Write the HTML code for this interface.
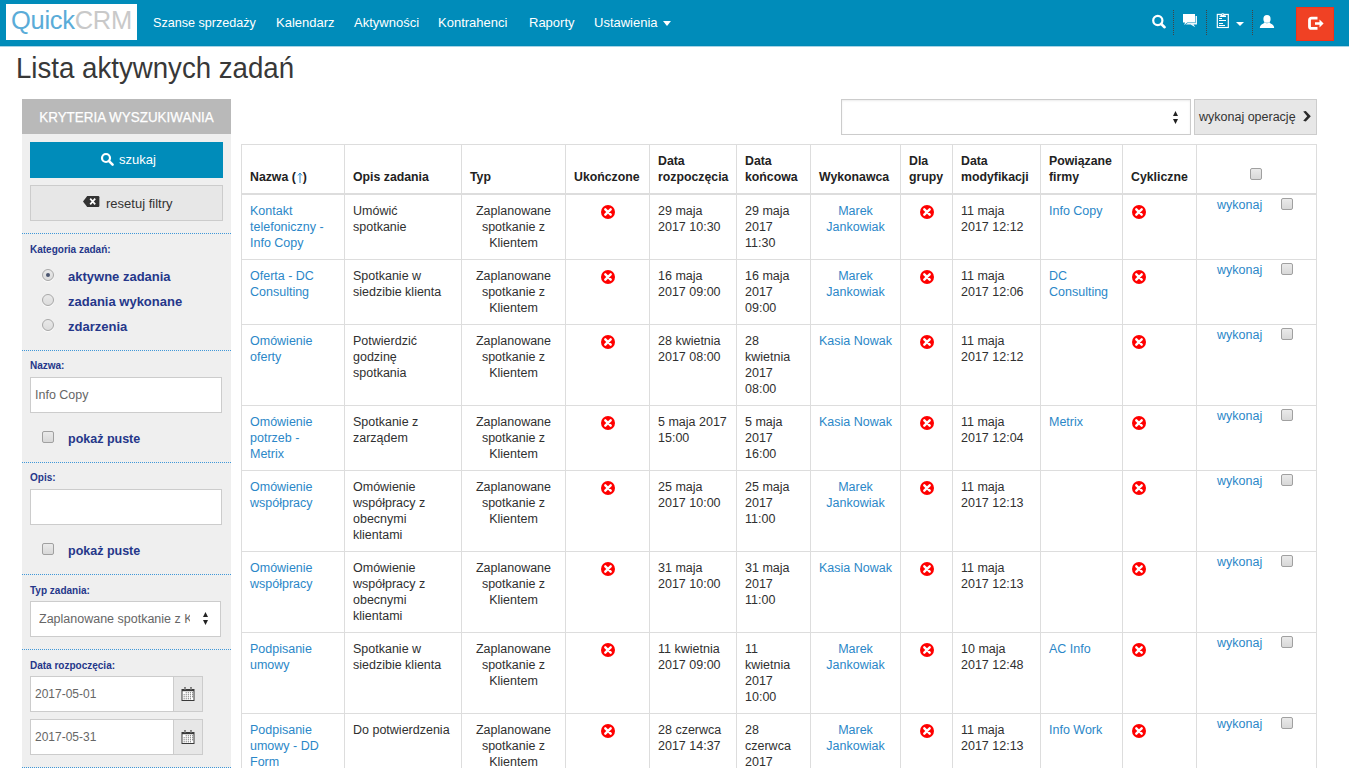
<!DOCTYPE html>
<html><head><meta charset="utf-8"><title>QuickCRM - Lista aktywnych zadań</title>
<style>
html,body{margin:0;padding:0;}
body{width:1349px;height:768px;overflow:hidden;position:relative;background:#fff;font-family:"Liberation Sans", sans-serif;}
.t{position:absolute;white-space:nowrap;font-family:"Liberation Sans", sans-serif;}
svg{display:block}
</style></head><body>
<div style="position:absolute;left:0px;top:0px;width:1349px;height:46px;background:#008cba"></div>
<div style="position:absolute;left:0px;top:45px;width:1349px;height:1px;background:#0088b6"></div>
<div style="position:absolute;left:0px;top:46px;width:1349px;height:1px;background:#a6d4e6"></div>
<div style="position:absolute;left:6px;top:4px;width:131px;height:36px;background:#fff"></div>
<div class="t" style="left:11px;top:4px;font-size:25.5px;line-height:32px;letter-spacing:-0.3px;"><span style="color:#5aacd8">Quick</span><span style="color:#c9c9c9">CRM</span></div>
<div class="t" style="left:153px;top:15px;font-size:12.6px;line-height:16px;color:#fff;">Szanse sprzedaży</div>
<div class="t" style="left:276px;top:15px;font-size:13px;line-height:16px;color:#fff;">Kalendarz</div>
<div class="t" style="left:354px;top:15px;font-size:13px;line-height:16px;color:#fff;">Aktywności</div>
<div class="t" style="left:438px;top:15px;font-size:13px;line-height:16px;color:#fff;">Kontrahenci</div>
<div class="t" style="left:529px;top:15px;font-size:13px;line-height:16px;color:#fff;">Raporty</div>
<div class="t" style="left:594px;top:15px;font-size:13px;line-height:16px;color:#fff;">Ustawienia</div>
<svg style="position:absolute;left:663px;top:21px" width="8" height="5"><path d="M0 0H8L4 5Z" fill="#fff"/></svg>
<svg style="position:absolute;left:1150px;top:12px" width="18" height="18" viewBox="0 0 18 18">
<circle cx="7.8" cy="8.5" r="4.6" fill="none" stroke="#fff" stroke-width="2.2"/>
<path d="M11 11.8 L14.6 15.2" stroke="#fff" stroke-width="2.6" stroke-linecap="round"/></svg>
<div style="position:absolute;left:1173px;top:10px;width:1px;height:26px;background-image:linear-gradient(#444 50%,transparent 50%);background-size:1px 2px"></div>
<div style="position:absolute;left:1206px;top:10px;width:1px;height:26px;background-image:linear-gradient(#444 50%,transparent 50%);background-size:1px 2px"></div>
<div style="position:absolute;left:1252px;top:10px;width:1px;height:26px;background-image:linear-gradient(#444 50%,transparent 50%);background-size:1px 2px"></div>
<svg style="position:absolute;left:1180px;top:12px" width="20" height="18" viewBox="0 0 20 18">
<path d="M5 4 H17 V12.5 H13.6 L15.2 15.2 L10.6 12.5 H5 Z" fill="#eaf5fb"/>
<path d="M3 2 H15 V10.5 H7.2 L4.2 13 L5 10.5 H3 Z" fill="#fff" stroke="#008cba" stroke-width="1.1"/>
<path d="M3 2 H15 V10.5 H7.2 L4.2 13 L5 10.5 H3 Z" fill="#fff"/></svg>
<svg style="position:absolute;left:1216px;top:12px" width="14" height="17" viewBox="0 0 14 17">
<rect x="1.3" y="2.4" width="11" height="13.1" fill="none" stroke="#fff" stroke-width="1.15"/>
<path d="M3.6 4.9 H10 V3.6 H8.6 Q8.6 1.2 6.8 1.2 Q5 1.2 5 3.6 H3.6 Z" fill="#fff"/>
<circle cx="6.8" cy="2.6" r="0.55" fill="#008cba"/>
<rect x="3" y="6" width="3" height="1" fill="#fff"/><rect x="3" y="8" width="7" height="1" fill="#fff"/>
<rect x="3" y="11" width="4" height="1" fill="#fff"/><rect x="3" y="13" width="6" height="1" fill="#fff"/></svg>
<svg style="position:absolute;left:1236px;top:22px" width="8" height="4"><path d="M0 0H8L4 4Z" fill="#fff"/></svg>
<svg style="position:absolute;left:1259px;top:14px" width="16" height="15" viewBox="0 0 16 15">
<ellipse cx="8" cy="4.9" rx="3.6" ry="3.9" fill="#fff"/>
<path d="M5.3 8.2 Q8 10.5 10.7 8.2 L11.5 9.6 Q15 10.8 15.2 14 H0.8 Q1 10.8 4.5 9.6 Z" fill="#fff"/></svg>
<div style="position:absolute;left:1296px;top:7px;width:38px;height:34px;background:#f04124;box-shadow:inset 0 0 0 1px #f2321a"></div>
<svg style="position:absolute;left:1306px;top:15px" width="20" height="17" viewBox="0 0 20 17">
<path d="M11.5 3.2 H5.5 Q3.5 3.2 3.5 5.2 V11.4 Q3.5 13.4 5.5 13.4 H11.5" fill="none" stroke="#fff" stroke-width="2.8"/>
<path d="M9 7.2 H13.5 V4.6 L17.6 8.5 L13.5 12.4 V9.8 H9 Z" fill="#fff"/></svg>
<div class="t" style="left:16px;top:52px;font-size:29px;line-height:32px;color:#383838;transform:scaleX(0.953);transform-origin:0 0;">Lista aktywnych zadań</div>
<div style="position:absolute;left:22px;top:99px;width:209px;height:669px;background:#efefef"></div>
<div style="position:absolute;left:22px;top:99px;width:209px;height:35px;background:#b9b9b9"></div>
<div class="t" style="left:22px;top:107px;width:209px;text-align:center;font-size:15px;line-height:20px;color:#fff;transform:scaleX(0.895);-webkit-text-stroke:0.25px #fff">KRYTERIA WYSZUKIWANIA</div>
<div style="position:absolute;left:30px;top:142px;width:193px;height:36px;background:#008cba"></div>
<svg style="position:absolute;left:100px;top:152px" width="15" height="15" viewBox="0 0 15 15">
<circle cx="6" cy="6" r="4" fill="none" stroke="#fff" stroke-width="2.2"/>
<path d="M8.8 8.8 L12.6 12.6" stroke="#fff" stroke-width="2.6" stroke-linecap="round"/></svg>
<div class="t" style="left:119px;top:152px;font-size:13px;line-height:16px;color:#fff;">szukaj</div>
<div style="position:absolute;left:30px;top:185px;width:193px;height:36px;background:#e7e7e7;box-sizing:border-box;border:1px solid #ccc"></div>
<svg style="position:absolute;left:82px;top:195px" width="18" height="13" viewBox="0 0 18 13">
<path d="M5.2 1 H16.2 Q17.4 1 17.4 2.2 V10.8 Q17.4 12 16.2 12 H5.2 L1 6.5 Z" fill="#333"/>
<path d="M8.2 3.6 L13.2 9.4 M13.2 3.6 L8.2 9.4" stroke="#fff" stroke-width="1.7"/></svg>
<div class="t" style="left:106px;top:196px;font-size:13px;line-height:16px;color:#333;">resetuj filtry</div>
<div style="position:absolute;left:22px;top:233px;width:209px;height:1px;background-image:linear-gradient(90deg,#3f97d8 50%,transparent 50%);background-size:2px 1px"></div>
<div class="t" style="left:30px;top:242px;font-size:10px;line-height:16px;color:#25378a;font-weight:700;">Kategoria zadań:</div>
<div style="position:absolute;left:42px;top:269px;width:12px;height:12px;border-radius:50%;box-sizing:border-box;border:1px solid #a8a8a8;background:linear-gradient(#e9e9e9,#dcdcdc);box-shadow:0 1px 1px rgba(255,255,255,.8)"></div>
<div style="position:absolute;left:46px;top:273px;width:4px;height:4px;border-radius:50%;background:#4a5570"></div>
<div class="t" style="left:68px;top:269px;font-size:13px;line-height:16px;color:#25378a;font-weight:700;">aktywne zadania</div>
<div style="position:absolute;left:42px;top:294px;width:12px;height:12px;border-radius:50%;box-sizing:border-box;border:1px solid #a8a8a8;background:linear-gradient(#e9e9e9,#dcdcdc);box-shadow:0 1px 1px rgba(255,255,255,.8)"></div>
<div class="t" style="left:68px;top:294px;font-size:13px;line-height:16px;color:#25378a;font-weight:700;">zadania wykonane</div>
<div style="position:absolute;left:42px;top:319px;width:12px;height:12px;border-radius:50%;box-sizing:border-box;border:1px solid #a8a8a8;background:linear-gradient(#e9e9e9,#dcdcdc);box-shadow:0 1px 1px rgba(255,255,255,.8)"></div>
<div class="t" style="left:68px;top:319px;font-size:13px;line-height:16px;color:#25378a;font-weight:700;">zdarzenia</div>
<div style="position:absolute;left:22px;top:350px;width:209px;height:1px;background-image:linear-gradient(90deg,#3f97d8 50%,transparent 50%);background-size:2px 1px"></div>
<div class="t" style="left:30px;top:358px;font-size:10px;line-height:16px;color:#25378a;font-weight:700;">Nazwa:</div>
<div style="position:absolute;left:30px;top:377px;width:192px;height:36px;background:#fff;box-sizing:border-box;border:1px solid #ccc"></div>
<div class="t" style="left:35px;top:387px;font-size:12.5px;line-height:16px;color:#666;">Info Copy</div>
<div style="position:absolute;left:42px;top:431px;width:12px;height:12px;border-radius:2px;box-sizing:border-box;border:1px solid #a0a0a0;background:linear-gradient(#eaeaea,#d8d8d8)"></div>
<div class="t" style="left:68px;top:431px;font-size:12.5px;line-height:16px;color:#25378a;font-weight:700;">pokaż puste</div>
<div style="position:absolute;left:22px;top:462px;width:209px;height:1px;background-image:linear-gradient(90deg,#3f97d8 50%,transparent 50%);background-size:2px 1px"></div>
<div class="t" style="left:30px;top:470px;font-size:10px;line-height:16px;color:#25378a;font-weight:700;">Opis:</div>
<div style="position:absolute;left:30px;top:489px;width:192px;height:36px;background:#fff;box-sizing:border-box;border:1px solid #ccc"></div>
<div style="position:absolute;left:42px;top:543px;width:12px;height:12px;border-radius:2px;box-sizing:border-box;border:1px solid #a0a0a0;background:linear-gradient(#eaeaea,#d8d8d8)"></div>
<div class="t" style="left:68px;top:543px;font-size:12.5px;line-height:16px;color:#25378a;font-weight:700;">pokaż puste</div>
<div style="position:absolute;left:22px;top:574px;width:209px;height:1px;background-image:linear-gradient(90deg,#3f97d8 50%,transparent 50%);background-size:2px 1px"></div>
<div class="t" style="left:30px;top:583px;font-size:10px;line-height:16px;color:#25378a;font-weight:700;">Typ zadania:</div>
<div style="position:absolute;left:30px;top:601px;width:191px;height:36px;background:#fff;box-sizing:border-box;border:1px solid #ccc"></div>
<div class="t" style="left:39px;top:611px;width:151px;overflow:hidden;font-size:12.5px;line-height:16px;color:#666;white-space:nowrap">Zaplanowane spotkanie z Klientem</div>
<svg style="position:absolute;left:203px;top:612px" width="5" height="14"><path d="M0 5H5L2.5 0Z M0 8H5L2.5 13Z" fill="#222"/></svg>
<div style="position:absolute;left:22px;top:649px;width:209px;height:1px;background-image:linear-gradient(90deg,#3f97d8 50%,transparent 50%);background-size:2px 1px"></div>
<div class="t" style="left:30px;top:658px;font-size:10px;line-height:16px;color:#25378a;font-weight:700;">Data rozpoczęcia:</div>
<div style="position:absolute;left:30px;top:676px;width:144px;height:36px;background:#fff;box-sizing:border-box;border:1px solid #ccc"></div>
<div style="position:absolute;left:173px;top:676px;width:30px;height:36px;background:#e7e7e7;box-sizing:border-box;border:1px solid #ccc"></div>
<div class="t" style="left:35px;top:686px;font-size:12px;line-height:16px;color:#666;">2017-05-01</div>
<svg style="position:absolute;left:181px;top:687px" width="14" height="14" viewBox="0 0 14 14">
<rect x="0.5" y="2" width="13" height="12" fill="#3a3a3a"/><rect x="1.5" y="4.2" width="11" height="8.8" fill="#fff"/>
<rect x="3.2" y="0.2" width="1.6" height="3" fill="#3a3a3a"/><rect x="9.2" y="0.2" width="1.6" height="3" fill="#3a3a3a"/>
<rect x="3.6" y="0.8" width="0.8" height="1.8" fill="#e7e7e7"/><rect x="9.6" y="0.8" width="0.8" height="1.8" fill="#e7e7e7"/>
<g fill="#777"><rect x="4.7" y="5.2" width="1.1" height="1.1"/><rect x="6.800000000000001" y="5.2" width="1.1" height="1.1"/><rect x="8.9" y="5.2" width="1.1" height="1.1"/><rect x="11.0" y="5.2" width="1.1" height="1.1"/><rect x="2.6" y="7.2" width="1.1" height="1.1"/><rect x="4.7" y="7.2" width="1.1" height="1.1"/><rect x="6.800000000000001" y="7.2" width="1.1" height="1.1"/><rect x="8.9" y="7.2" width="1.1" height="1.1"/><rect x="11.0" y="7.2" width="1.1" height="1.1"/><rect x="2.6" y="9.2" width="1.1" height="1.1"/><rect x="4.7" y="9.2" width="1.1" height="1.1"/><rect x="6.800000000000001" y="9.2" width="1.1" height="1.1"/><rect x="8.9" y="9.2" width="1.1" height="1.1"/><rect x="11.0" y="9.2" width="1.1" height="1.1"/><rect x="2.6" y="11.2" width="1.1" height="1.1"/><rect x="4.7" y="11.2" width="1.1" height="1.1"/><rect x="6.800000000000001" y="11.2" width="1.1" height="1.1"/><rect x="8.9" y="11.2" width="1.1" height="1.1"/></g></svg>
<div style="position:absolute;left:30px;top:719px;width:144px;height:36px;background:#fff;box-sizing:border-box;border:1px solid #ccc"></div>
<div style="position:absolute;left:173px;top:719px;width:30px;height:36px;background:#e7e7e7;box-sizing:border-box;border:1px solid #ccc"></div>
<div class="t" style="left:35px;top:729px;font-size:12px;line-height:16px;color:#666;">2017-05-31</div>
<svg style="position:absolute;left:181px;top:730px" width="14" height="14" viewBox="0 0 14 14">
<rect x="0.5" y="2" width="13" height="12" fill="#3a3a3a"/><rect x="1.5" y="4.2" width="11" height="8.8" fill="#fff"/>
<rect x="3.2" y="0.2" width="1.6" height="3" fill="#3a3a3a"/><rect x="9.2" y="0.2" width="1.6" height="3" fill="#3a3a3a"/>
<rect x="3.6" y="0.8" width="0.8" height="1.8" fill="#e7e7e7"/><rect x="9.6" y="0.8" width="0.8" height="1.8" fill="#e7e7e7"/>
<g fill="#777"><rect x="4.7" y="5.2" width="1.1" height="1.1"/><rect x="6.800000000000001" y="5.2" width="1.1" height="1.1"/><rect x="8.9" y="5.2" width="1.1" height="1.1"/><rect x="11.0" y="5.2" width="1.1" height="1.1"/><rect x="2.6" y="7.2" width="1.1" height="1.1"/><rect x="4.7" y="7.2" width="1.1" height="1.1"/><rect x="6.800000000000001" y="7.2" width="1.1" height="1.1"/><rect x="8.9" y="7.2" width="1.1" height="1.1"/><rect x="11.0" y="7.2" width="1.1" height="1.1"/><rect x="2.6" y="9.2" width="1.1" height="1.1"/><rect x="4.7" y="9.2" width="1.1" height="1.1"/><rect x="6.800000000000001" y="9.2" width="1.1" height="1.1"/><rect x="8.9" y="9.2" width="1.1" height="1.1"/><rect x="11.0" y="9.2" width="1.1" height="1.1"/><rect x="2.6" y="11.2" width="1.1" height="1.1"/><rect x="4.7" y="11.2" width="1.1" height="1.1"/><rect x="6.800000000000001" y="11.2" width="1.1" height="1.1"/><rect x="8.9" y="11.2" width="1.1" height="1.1"/></g></svg>
<div style="position:absolute;left:22px;top:767px;width:209px;height:1px;background-image:linear-gradient(90deg,#3f97d8 50%,transparent 50%);background-size:2px 1px"></div>
<div style="position:absolute;left:841px;top:99px;width:350px;height:36px;background:#fff;box-sizing:border-box;border:1px solid #ccc;box-shadow:inset 0 1px 2px rgba(0,0,0,.08)"></div>
<svg style="position:absolute;left:1173px;top:111px" width="5" height="13"><path d="M0 5H5L2.5 0Z M0 8H5L2.5 13Z" fill="#222"/></svg>
<div style="position:absolute;left:1194px;top:99px;width:123px;height:36px;background:#e7e7e7;box-sizing:border-box;border:1px solid #ccc"></div>
<div class="t" style="left:1199px;top:109px;font-size:12.5px;line-height:16px;color:#333;">wykonaj operację</div>
<svg style="position:absolute;left:1302px;top:110px" width="10" height="13"><path d="M1.2 1.6 L3.8 1 L8.8 6.2 L3.8 11.4 L1.2 10.8 L5.2 6.2 Z" fill="#2a2a2a"/></svg>
<div style="position:absolute;left:241px;top:144px;width:1076px;height:1px;background:#ddd"></div>
<div style="position:absolute;left:241px;top:193px;width:1076px;height:2px;background:#ddd"></div>
<div style="position:absolute;left:241px;top:259px;width:1076px;height:1px;background:#ddd"></div>
<div style="position:absolute;left:241px;top:324px;width:1076px;height:1px;background:#ddd"></div>
<div style="position:absolute;left:241px;top:405px;width:1076px;height:1px;background:#ddd"></div>
<div style="position:absolute;left:241px;top:470px;width:1076px;height:1px;background:#ddd"></div>
<div style="position:absolute;left:241px;top:551px;width:1076px;height:1px;background:#ddd"></div>
<div style="position:absolute;left:241px;top:632px;width:1076px;height:1px;background:#ddd"></div>
<div style="position:absolute;left:241px;top:713px;width:1076px;height:1px;background:#ddd"></div>
<div style="position:absolute;left:241px;top:144px;width:1px;height:624px;background:#ddd"></div>
<div style="position:absolute;left:344px;top:144px;width:1px;height:624px;background:#ddd"></div>
<div style="position:absolute;left:461px;top:144px;width:1px;height:624px;background:#ddd"></div>
<div style="position:absolute;left:565px;top:144px;width:1px;height:624px;background:#ddd"></div>
<div style="position:absolute;left:649px;top:144px;width:1px;height:624px;background:#ddd"></div>
<div style="position:absolute;left:736px;top:144px;width:1px;height:624px;background:#ddd"></div>
<div style="position:absolute;left:810px;top:144px;width:1px;height:624px;background:#ddd"></div>
<div style="position:absolute;left:900px;top:144px;width:1px;height:624px;background:#ddd"></div>
<div style="position:absolute;left:952px;top:144px;width:1px;height:624px;background:#ddd"></div>
<div style="position:absolute;left:1040px;top:144px;width:1px;height:624px;background:#ddd"></div>
<div style="position:absolute;left:1122px;top:144px;width:1px;height:624px;background:#ddd"></div>
<div style="position:absolute;left:1196px;top:144px;width:1px;height:624px;background:#ddd"></div>
<div style="position:absolute;left:1316px;top:144px;width:1px;height:624px;background:#ddd"></div>
<div class="t" style="left:250px;top:169px;font-size:12.3px;line-height:16px;color:#222;font-weight:700;">Nazwa (<span style="display:inline-block;width:7px;height:10px;position:relative"><svg style="position:absolute;left:1px;top:1px" width="6" height="11"><path d="M3 1.5V11" stroke="#2a8bd0" stroke-width="1"/><path d="M1 3.5L3 1L5 3.5" fill="none" stroke="#2a8bd0" stroke-width="1"/></svg></span>)</div>
<div class="t" style="left:353px;top:169px;font-size:12.3px;line-height:16px;color:#222;font-weight:700;">Opis zadania</div>
<div class="t" style="left:470px;top:169px;font-size:12.3px;line-height:16px;color:#222;font-weight:700;">Typ</div>
<div class="t" style="left:574px;top:169px;font-size:12.3px;line-height:16px;color:#222;font-weight:700;">Ukończone</div>
<div class="t" style="left:658px;top:153px;font-size:12.3px;line-height:16px;color:#222;font-weight:700;">Data<br>rozpoczęcia</div>
<div class="t" style="left:745px;top:153px;font-size:12.3px;line-height:16px;color:#222;font-weight:700;">Data<br>końcowa</div>
<div class="t" style="left:819px;top:169px;font-size:12.3px;line-height:16px;color:#222;font-weight:700;">Wykonawca</div>
<div class="t" style="left:909px;top:153px;font-size:12.3px;line-height:16px;color:#222;font-weight:700;">Dla<br>grupy</div>
<div class="t" style="left:961px;top:153px;font-size:12.3px;line-height:16px;color:#222;font-weight:700;">Data<br>modyfikacji</div>
<div class="t" style="left:1049px;top:153px;font-size:12.3px;line-height:16px;color:#222;font-weight:700;">Powiązane<br>firmy</div>
<div class="t" style="left:1131px;top:169px;font-size:12.3px;line-height:16px;color:#222;font-weight:700;">Cykliczne</div>
<div style="position:absolute;left:1250px;top:168px;width:12px;height:12px;border-radius:2px;box-sizing:border-box;border:1px solid #a0a0a0;background:linear-gradient(#eaeaea,#d8d8d8)"></div>
<div class="t" style="left:250px;top:203px;font-size:12.5px;line-height:16px;color:#2b87c8;">Kontakt<br>telefoniczny -<br>Info Copy</div>
<div class="t" style="left:353px;top:203px;font-size:12.5px;line-height:16px;color:#303030;">Umówić<br>spotkanie</div>
<div class="t" style="left:462px;top:203px;font-size:12.5px;line-height:16px;color:#303030;width:103px;text-align:center;">Zaplanowane<br>spotkanie z<br>Klientem</div>
<svg style="position:absolute;left:601px;top:205px" width="14" height="14" viewBox="0 0 14 14">
<circle cx="7" cy="7" r="7" fill="#f00"/><path d="M4.3 4.3 L9.7 9.7 M9.7 4.3 L4.3 9.7" stroke="#fff" stroke-width="2.4" stroke-linecap="round"/></svg>
<div class="t" style="left:658px;top:203px;font-size:12.5px;line-height:16px;color:#303030;">29 maja<br>2017 10:30</div>
<div class="t" style="left:745px;top:203px;font-size:12.5px;line-height:16px;color:#303030;">29 maja<br>2017<br>11:30</div>
<div class="t" style="left:811px;top:203px;font-size:12.5px;line-height:16px;color:#2b87c8;width:89px;text-align:center;">Marek<br>Jankowiak</div>
<svg style="position:absolute;left:920px;top:205px" width="14" height="14" viewBox="0 0 14 14">
<circle cx="7" cy="7" r="7" fill="#f00"/><path d="M4.3 4.3 L9.7 9.7 M9.7 4.3 L4.3 9.7" stroke="#fff" stroke-width="2.4" stroke-linecap="round"/></svg>
<div class="t" style="left:961px;top:203px;font-size:12.5px;line-height:16px;color:#303030;">11 maja<br>2017 12:12</div>
<div class="t" style="left:1049px;top:203px;font-size:12.5px;line-height:16px;color:#2b87c8;">Info Copy</div>
<svg style="position:absolute;left:1132px;top:205px" width="14" height="14" viewBox="0 0 14 14">
<circle cx="7" cy="7" r="7" fill="#f00"/><path d="M4.3 4.3 L9.7 9.7 M9.7 4.3 L4.3 9.7" stroke="#fff" stroke-width="2.4" stroke-linecap="round"/></svg>
<div class="t" style="left:1217px;top:197px;font-size:12.5px;line-height:16px;color:#2b87c8;">wykonaj</div>
<div style="position:absolute;left:1281px;top:198px;width:12px;height:12px;border-radius:2px;box-sizing:border-box;border:1px solid #a0a0a0;background:linear-gradient(#eaeaea,#d8d8d8)"></div>
<div class="t" style="left:250px;top:268px;font-size:12.5px;line-height:16px;color:#2b87c8;">Oferta - DC<br>Consulting</div>
<div class="t" style="left:353px;top:268px;font-size:12.5px;line-height:16px;color:#303030;">Spotkanie w<br>siedzibie klienta</div>
<div class="t" style="left:462px;top:268px;font-size:12.5px;line-height:16px;color:#303030;width:103px;text-align:center;">Zaplanowane<br>spotkanie z<br>Klientem</div>
<svg style="position:absolute;left:601px;top:270px" width="14" height="14" viewBox="0 0 14 14">
<circle cx="7" cy="7" r="7" fill="#f00"/><path d="M4.3 4.3 L9.7 9.7 M9.7 4.3 L4.3 9.7" stroke="#fff" stroke-width="2.4" stroke-linecap="round"/></svg>
<div class="t" style="left:658px;top:268px;font-size:12.5px;line-height:16px;color:#303030;">16 maja<br>2017 09:00</div>
<div class="t" style="left:745px;top:268px;font-size:12.5px;line-height:16px;color:#303030;">16 maja<br>2017<br>09:00</div>
<div class="t" style="left:811px;top:268px;font-size:12.5px;line-height:16px;color:#2b87c8;width:89px;text-align:center;">Marek<br>Jankowiak</div>
<svg style="position:absolute;left:920px;top:270px" width="14" height="14" viewBox="0 0 14 14">
<circle cx="7" cy="7" r="7" fill="#f00"/><path d="M4.3 4.3 L9.7 9.7 M9.7 4.3 L4.3 9.7" stroke="#fff" stroke-width="2.4" stroke-linecap="round"/></svg>
<div class="t" style="left:961px;top:268px;font-size:12.5px;line-height:16px;color:#303030;">11 maja<br>2017 12:06</div>
<div class="t" style="left:1049px;top:268px;font-size:12.5px;line-height:16px;color:#2b87c8;">DC<br>Consulting</div>
<svg style="position:absolute;left:1132px;top:270px" width="14" height="14" viewBox="0 0 14 14">
<circle cx="7" cy="7" r="7" fill="#f00"/><path d="M4.3 4.3 L9.7 9.7 M9.7 4.3 L4.3 9.7" stroke="#fff" stroke-width="2.4" stroke-linecap="round"/></svg>
<div class="t" style="left:1217px;top:262px;font-size:12.5px;line-height:16px;color:#2b87c8;">wykonaj</div>
<div style="position:absolute;left:1281px;top:263px;width:12px;height:12px;border-radius:2px;box-sizing:border-box;border:1px solid #a0a0a0;background:linear-gradient(#eaeaea,#d8d8d8)"></div>
<div class="t" style="left:250px;top:333px;font-size:12.5px;line-height:16px;color:#2b87c8;">Omówienie<br>oferty</div>
<div class="t" style="left:353px;top:333px;font-size:12.5px;line-height:16px;color:#303030;">Potwierdzić<br>godzinę<br>spotkania</div>
<div class="t" style="left:462px;top:333px;font-size:12.5px;line-height:16px;color:#303030;width:103px;text-align:center;">Zaplanowane<br>spotkanie z<br>Klientem</div>
<svg style="position:absolute;left:601px;top:335px" width="14" height="14" viewBox="0 0 14 14">
<circle cx="7" cy="7" r="7" fill="#f00"/><path d="M4.3 4.3 L9.7 9.7 M9.7 4.3 L4.3 9.7" stroke="#fff" stroke-width="2.4" stroke-linecap="round"/></svg>
<div class="t" style="left:658px;top:333px;font-size:12.5px;line-height:16px;color:#303030;">28 kwietnia<br>2017 08:00</div>
<div class="t" style="left:745px;top:333px;font-size:12.5px;line-height:16px;color:#303030;">28<br>kwietnia<br>2017<br>08:00</div>
<div class="t" style="left:811px;top:333px;font-size:12.5px;line-height:16px;color:#2b87c8;width:89px;text-align:center;">Kasia Nowak</div>
<svg style="position:absolute;left:920px;top:335px" width="14" height="14" viewBox="0 0 14 14">
<circle cx="7" cy="7" r="7" fill="#f00"/><path d="M4.3 4.3 L9.7 9.7 M9.7 4.3 L4.3 9.7" stroke="#fff" stroke-width="2.4" stroke-linecap="round"/></svg>
<div class="t" style="left:961px;top:333px;font-size:12.5px;line-height:16px;color:#303030;">11 maja<br>2017 12:12</div>
<svg style="position:absolute;left:1132px;top:335px" width="14" height="14" viewBox="0 0 14 14">
<circle cx="7" cy="7" r="7" fill="#f00"/><path d="M4.3 4.3 L9.7 9.7 M9.7 4.3 L4.3 9.7" stroke="#fff" stroke-width="2.4" stroke-linecap="round"/></svg>
<div class="t" style="left:1217px;top:327px;font-size:12.5px;line-height:16px;color:#2b87c8;">wykonaj</div>
<div style="position:absolute;left:1281px;top:328px;width:12px;height:12px;border-radius:2px;box-sizing:border-box;border:1px solid #a0a0a0;background:linear-gradient(#eaeaea,#d8d8d8)"></div>
<div class="t" style="left:250px;top:414px;font-size:12.5px;line-height:16px;color:#2b87c8;">Omówienie<br>potrzeb -<br>Metrix</div>
<div class="t" style="left:353px;top:414px;font-size:12.5px;line-height:16px;color:#303030;">Spotkanie z<br>zarządem</div>
<div class="t" style="left:462px;top:414px;font-size:12.5px;line-height:16px;color:#303030;width:103px;text-align:center;">Zaplanowane<br>spotkanie z<br>Klientem</div>
<svg style="position:absolute;left:601px;top:416px" width="14" height="14" viewBox="0 0 14 14">
<circle cx="7" cy="7" r="7" fill="#f00"/><path d="M4.3 4.3 L9.7 9.7 M9.7 4.3 L4.3 9.7" stroke="#fff" stroke-width="2.4" stroke-linecap="round"/></svg>
<div class="t" style="left:658px;top:414px;font-size:12.5px;line-height:16px;color:#303030;">5 maja 2017<br>15:00</div>
<div class="t" style="left:745px;top:414px;font-size:12.5px;line-height:16px;color:#303030;">5 maja<br>2017<br>16:00</div>
<div class="t" style="left:811px;top:414px;font-size:12.5px;line-height:16px;color:#2b87c8;width:89px;text-align:center;">Kasia Nowak</div>
<svg style="position:absolute;left:920px;top:416px" width="14" height="14" viewBox="0 0 14 14">
<circle cx="7" cy="7" r="7" fill="#f00"/><path d="M4.3 4.3 L9.7 9.7 M9.7 4.3 L4.3 9.7" stroke="#fff" stroke-width="2.4" stroke-linecap="round"/></svg>
<div class="t" style="left:961px;top:414px;font-size:12.5px;line-height:16px;color:#303030;">11 maja<br>2017 12:04</div>
<div class="t" style="left:1049px;top:414px;font-size:12.5px;line-height:16px;color:#2b87c8;">Metrix</div>
<svg style="position:absolute;left:1132px;top:416px" width="14" height="14" viewBox="0 0 14 14">
<circle cx="7" cy="7" r="7" fill="#f00"/><path d="M4.3 4.3 L9.7 9.7 M9.7 4.3 L4.3 9.7" stroke="#fff" stroke-width="2.4" stroke-linecap="round"/></svg>
<div class="t" style="left:1217px;top:408px;font-size:12.5px;line-height:16px;color:#2b87c8;">wykonaj</div>
<div style="position:absolute;left:1281px;top:409px;width:12px;height:12px;border-radius:2px;box-sizing:border-box;border:1px solid #a0a0a0;background:linear-gradient(#eaeaea,#d8d8d8)"></div>
<div class="t" style="left:250px;top:479px;font-size:12.5px;line-height:16px;color:#2b87c8;">Omówienie<br>współpracy</div>
<div class="t" style="left:353px;top:479px;font-size:12.5px;line-height:16px;color:#303030;">Omówienie<br>współpracy z<br>obecnymi<br>klientami</div>
<div class="t" style="left:462px;top:479px;font-size:12.5px;line-height:16px;color:#303030;width:103px;text-align:center;">Zaplanowane<br>spotkanie z<br>Klientem</div>
<svg style="position:absolute;left:601px;top:481px" width="14" height="14" viewBox="0 0 14 14">
<circle cx="7" cy="7" r="7" fill="#f00"/><path d="M4.3 4.3 L9.7 9.7 M9.7 4.3 L4.3 9.7" stroke="#fff" stroke-width="2.4" stroke-linecap="round"/></svg>
<div class="t" style="left:658px;top:479px;font-size:12.5px;line-height:16px;color:#303030;">25 maja<br>2017 10:00</div>
<div class="t" style="left:745px;top:479px;font-size:12.5px;line-height:16px;color:#303030;">25 maja<br>2017<br>11:00</div>
<div class="t" style="left:811px;top:479px;font-size:12.5px;line-height:16px;color:#2b87c8;width:89px;text-align:center;">Marek<br>Jankowiak</div>
<svg style="position:absolute;left:920px;top:481px" width="14" height="14" viewBox="0 0 14 14">
<circle cx="7" cy="7" r="7" fill="#f00"/><path d="M4.3 4.3 L9.7 9.7 M9.7 4.3 L4.3 9.7" stroke="#fff" stroke-width="2.4" stroke-linecap="round"/></svg>
<div class="t" style="left:961px;top:479px;font-size:12.5px;line-height:16px;color:#303030;">11 maja<br>2017 12:13</div>
<svg style="position:absolute;left:1132px;top:481px" width="14" height="14" viewBox="0 0 14 14">
<circle cx="7" cy="7" r="7" fill="#f00"/><path d="M4.3 4.3 L9.7 9.7 M9.7 4.3 L4.3 9.7" stroke="#fff" stroke-width="2.4" stroke-linecap="round"/></svg>
<div class="t" style="left:1217px;top:473px;font-size:12.5px;line-height:16px;color:#2b87c8;">wykonaj</div>
<div style="position:absolute;left:1281px;top:474px;width:12px;height:12px;border-radius:2px;box-sizing:border-box;border:1px solid #a0a0a0;background:linear-gradient(#eaeaea,#d8d8d8)"></div>
<div class="t" style="left:250px;top:560px;font-size:12.5px;line-height:16px;color:#2b87c8;">Omówienie<br>współpracy</div>
<div class="t" style="left:353px;top:560px;font-size:12.5px;line-height:16px;color:#303030;">Omówienie<br>współpracy z<br>obecnymi<br>klientami</div>
<div class="t" style="left:462px;top:560px;font-size:12.5px;line-height:16px;color:#303030;width:103px;text-align:center;">Zaplanowane<br>spotkanie z<br>Klientem</div>
<svg style="position:absolute;left:601px;top:562px" width="14" height="14" viewBox="0 0 14 14">
<circle cx="7" cy="7" r="7" fill="#f00"/><path d="M4.3 4.3 L9.7 9.7 M9.7 4.3 L4.3 9.7" stroke="#fff" stroke-width="2.4" stroke-linecap="round"/></svg>
<div class="t" style="left:658px;top:560px;font-size:12.5px;line-height:16px;color:#303030;">31 maja<br>2017 10:00</div>
<div class="t" style="left:745px;top:560px;font-size:12.5px;line-height:16px;color:#303030;">31 maja<br>2017<br>11:00</div>
<div class="t" style="left:811px;top:560px;font-size:12.5px;line-height:16px;color:#2b87c8;width:89px;text-align:center;">Kasia Nowak</div>
<svg style="position:absolute;left:920px;top:562px" width="14" height="14" viewBox="0 0 14 14">
<circle cx="7" cy="7" r="7" fill="#f00"/><path d="M4.3 4.3 L9.7 9.7 M9.7 4.3 L4.3 9.7" stroke="#fff" stroke-width="2.4" stroke-linecap="round"/></svg>
<div class="t" style="left:961px;top:560px;font-size:12.5px;line-height:16px;color:#303030;">11 maja<br>2017 12:13</div>
<svg style="position:absolute;left:1132px;top:562px" width="14" height="14" viewBox="0 0 14 14">
<circle cx="7" cy="7" r="7" fill="#f00"/><path d="M4.3 4.3 L9.7 9.7 M9.7 4.3 L4.3 9.7" stroke="#fff" stroke-width="2.4" stroke-linecap="round"/></svg>
<div class="t" style="left:1217px;top:554px;font-size:12.5px;line-height:16px;color:#2b87c8;">wykonaj</div>
<div style="position:absolute;left:1281px;top:555px;width:12px;height:12px;border-radius:2px;box-sizing:border-box;border:1px solid #a0a0a0;background:linear-gradient(#eaeaea,#d8d8d8)"></div>
<div class="t" style="left:250px;top:641px;font-size:12.5px;line-height:16px;color:#2b87c8;">Podpisanie<br>umowy</div>
<div class="t" style="left:353px;top:641px;font-size:12.5px;line-height:16px;color:#303030;">Spotkanie w<br>siedzibie klienta</div>
<div class="t" style="left:462px;top:641px;font-size:12.5px;line-height:16px;color:#303030;width:103px;text-align:center;">Zaplanowane<br>spotkanie z<br>Klientem</div>
<svg style="position:absolute;left:601px;top:643px" width="14" height="14" viewBox="0 0 14 14">
<circle cx="7" cy="7" r="7" fill="#f00"/><path d="M4.3 4.3 L9.7 9.7 M9.7 4.3 L4.3 9.7" stroke="#fff" stroke-width="2.4" stroke-linecap="round"/></svg>
<div class="t" style="left:658px;top:641px;font-size:12.5px;line-height:16px;color:#303030;">11 kwietnia<br>2017 09:00</div>
<div class="t" style="left:745px;top:641px;font-size:12.5px;line-height:16px;color:#303030;">11<br>kwietnia<br>2017<br>10:00</div>
<div class="t" style="left:811px;top:641px;font-size:12.5px;line-height:16px;color:#2b87c8;width:89px;text-align:center;">Marek<br>Jankowiak</div>
<svg style="position:absolute;left:920px;top:643px" width="14" height="14" viewBox="0 0 14 14">
<circle cx="7" cy="7" r="7" fill="#f00"/><path d="M4.3 4.3 L9.7 9.7 M9.7 4.3 L4.3 9.7" stroke="#fff" stroke-width="2.4" stroke-linecap="round"/></svg>
<div class="t" style="left:961px;top:641px;font-size:12.5px;line-height:16px;color:#303030;">10 maja<br>2017 12:48</div>
<div class="t" style="left:1049px;top:641px;font-size:12.5px;line-height:16px;color:#2b87c8;">AC Info</div>
<svg style="position:absolute;left:1132px;top:643px" width="14" height="14" viewBox="0 0 14 14">
<circle cx="7" cy="7" r="7" fill="#f00"/><path d="M4.3 4.3 L9.7 9.7 M9.7 4.3 L4.3 9.7" stroke="#fff" stroke-width="2.4" stroke-linecap="round"/></svg>
<div class="t" style="left:1217px;top:635px;font-size:12.5px;line-height:16px;color:#2b87c8;">wykonaj</div>
<div style="position:absolute;left:1281px;top:636px;width:12px;height:12px;border-radius:2px;box-sizing:border-box;border:1px solid #a0a0a0;background:linear-gradient(#eaeaea,#d8d8d8)"></div>
<div class="t" style="left:250px;top:722px;font-size:12.5px;line-height:16px;color:#2b87c8;">Podpisanie<br>umowy - DD<br>Form</div>
<div class="t" style="left:353px;top:722px;font-size:12.5px;line-height:16px;color:#303030;">Do potwierdzenia</div>
<div class="t" style="left:462px;top:722px;font-size:12.5px;line-height:16px;color:#303030;width:103px;text-align:center;">Zaplanowane<br>spotkanie z<br>Klientem</div>
<svg style="position:absolute;left:601px;top:724px" width="14" height="14" viewBox="0 0 14 14">
<circle cx="7" cy="7" r="7" fill="#f00"/><path d="M4.3 4.3 L9.7 9.7 M9.7 4.3 L4.3 9.7" stroke="#fff" stroke-width="2.4" stroke-linecap="round"/></svg>
<div class="t" style="left:658px;top:722px;font-size:12.5px;line-height:16px;color:#303030;">28 czerwca<br>2017 14:37</div>
<div class="t" style="left:745px;top:722px;font-size:12.5px;line-height:16px;color:#303030;">28<br>czerwca<br>2017<br>14:37</div>
<div class="t" style="left:811px;top:722px;font-size:12.5px;line-height:16px;color:#2b87c8;width:89px;text-align:center;">Marek<br>Jankowiak</div>
<svg style="position:absolute;left:920px;top:724px" width="14" height="14" viewBox="0 0 14 14">
<circle cx="7" cy="7" r="7" fill="#f00"/><path d="M4.3 4.3 L9.7 9.7 M9.7 4.3 L4.3 9.7" stroke="#fff" stroke-width="2.4" stroke-linecap="round"/></svg>
<div class="t" style="left:961px;top:722px;font-size:12.5px;line-height:16px;color:#303030;">11 maja<br>2017 12:13</div>
<div class="t" style="left:1049px;top:722px;font-size:12.5px;line-height:16px;color:#2b87c8;">Info Work</div>
<svg style="position:absolute;left:1132px;top:724px" width="14" height="14" viewBox="0 0 14 14">
<circle cx="7" cy="7" r="7" fill="#f00"/><path d="M4.3 4.3 L9.7 9.7 M9.7 4.3 L4.3 9.7" stroke="#fff" stroke-width="2.4" stroke-linecap="round"/></svg>
<div class="t" style="left:1217px;top:716px;font-size:12.5px;line-height:16px;color:#2b87c8;">wykonaj</div>
<div style="position:absolute;left:1281px;top:717px;width:12px;height:12px;border-radius:2px;box-sizing:border-box;border:1px solid #a0a0a0;background:linear-gradient(#eaeaea,#d8d8d8)"></div>
</body></html>
